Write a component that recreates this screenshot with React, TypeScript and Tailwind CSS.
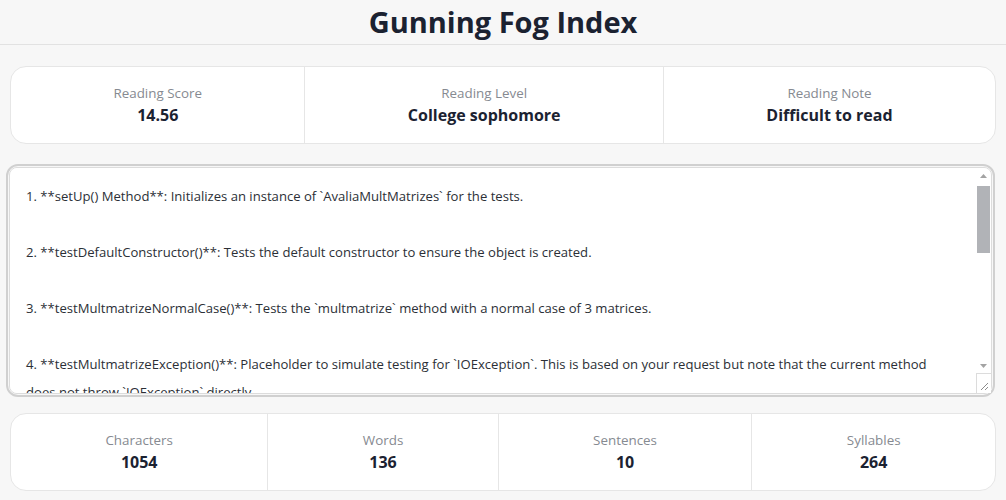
import { useState } from 'react';

const SAMPLE = `1. **setUp() Method**: Initializes an instance of \`AvaliaMultMatrizes\` for the tests.

2. **testDefaultConstructor()**: Tests the default constructor to ensure the object is created.

3. **testMultmatrizeNormalCase()**: Tests the \`multmatrize\` method with a normal case of 3 matrices.

4. **testMultmatrizeException()**: Placeholder to simulate testing for \`IOException\`. This is based on your request but note that the current method does not throw \`IOException\` directly.

5. **testMultmatrizeMismatch()**: Checks the behaviour when matrix sizes do not match.`;

interface Stat {
  label: string;
  value: string;
}

function StatCard({ stats }: { stats: Stat[] }) {
  return (
    <div className="flex rounded-2xl border border-[#e6e6e6] bg-white">
      {stats.map((s, i) => (
        <div
          key={s.label}
          className={`flex-auto py-4 text-center ${i > 0 ? 'border-l border-[#e6e6e6]' : ''}`}
        >
          <p className="text-[13.4px] leading-5 text-[#868a91]">{s.label}</p>
          <p className="text-[16px] leading-6 font-bold text-[#1b2231]">{s.value}</p>
        </div>
      ))}
    </div>
  );
}

// Classic scrollbar drawn over the textarea (headless capture hides native ones)
function FakeScrollbar() {
  return (
    <div className="pointer-events-none absolute right-[2px] top-[2px] bottom-[2px] w-[15px] flex flex-col">
      <div className="h-[15px] flex items-center justify-center">
        <svg width="7" height="4" viewBox="0 0 7 4">
          <path d="M3.5 0L7 4H0z" fill="#a3a3a3" />
        </svg>
      </div>
      <div className="flex-1 px-[1px] pt-[3px]">
        <div className="h-[67px] bg-[#b1b3b7]" />
      </div>
      <div className="h-[15px] flex items-center justify-center">
        <svg width="7" height="4" viewBox="0 0 7 4">
          <path d="M0 0H7L3.5 4z" fill="#a3a3a3" />
        </svg>
      </div>
      <div className="h-[20px] border-t border-l border-[#dcdcdc] bg-white flex items-end justify-end p-[2px]">
        <svg width="10" height="10" viewBox="0 0 10 10">
          <path d="M9 2L2 9M9 6L6 9" stroke="#8c8c8c" strokeWidth="1" />
        </svg>
      </div>
    </div>
  );
}

export default function App() {
  const [text, setText] = useState(SAMPLE);

  return (
    <div
      className="min-h-screen bg-[#f7f7f7]"
      style={{ fontFamily: '"Open Sans", "Noto Sans", sans-serif' }}
    >
      {/* Header */}
      <header className="h-[45px] border-b border-[#e2e2e2] flex items-center justify-center">
        <h1 className="text-[29px] font-bold text-[#1b2231]">Gunning Fog Index</h1>
      </header>

      <main className="px-[10px] pt-[21px] flex flex-col">
        <StatCard
          stats={[
            { label: 'Reading Score', value: '14.56' },
            { label: 'Reading Level', value: 'College sophomore' },
            { label: 'Reading Note', value: 'Difficult to read' },
          ]}
        />

        {/* Text input */}
        <div className="relative mt-[20px] -ml-[4px] mr-[1px] rounded-xl border-2 border-[#d0d0d0] p-[1px]">
          <textarea
            value={text}
            onChange={(e) => setText(e.target.value)}
            className="block w-full h-[227px] rounded-lg border border-[#dcdcdc] bg-white pl-4 pr-[36px] pt-[14px] pb-4 text-[13.1px] leading-[28px] text-[#2b2f36] outline-none resize-none"
          />
          <FakeScrollbar />
        </div>

        <div className="mt-[16px]">
          <StatCard
            stats={[
              { label: 'Characters', value: '1054' },
              { label: 'Words', value: '136' },
              { label: 'Sentences', value: '10' },
              { label: 'Syllables', value: '264' },
            ]}
          />
        </div>
      </main>
    </div>
  );
}
